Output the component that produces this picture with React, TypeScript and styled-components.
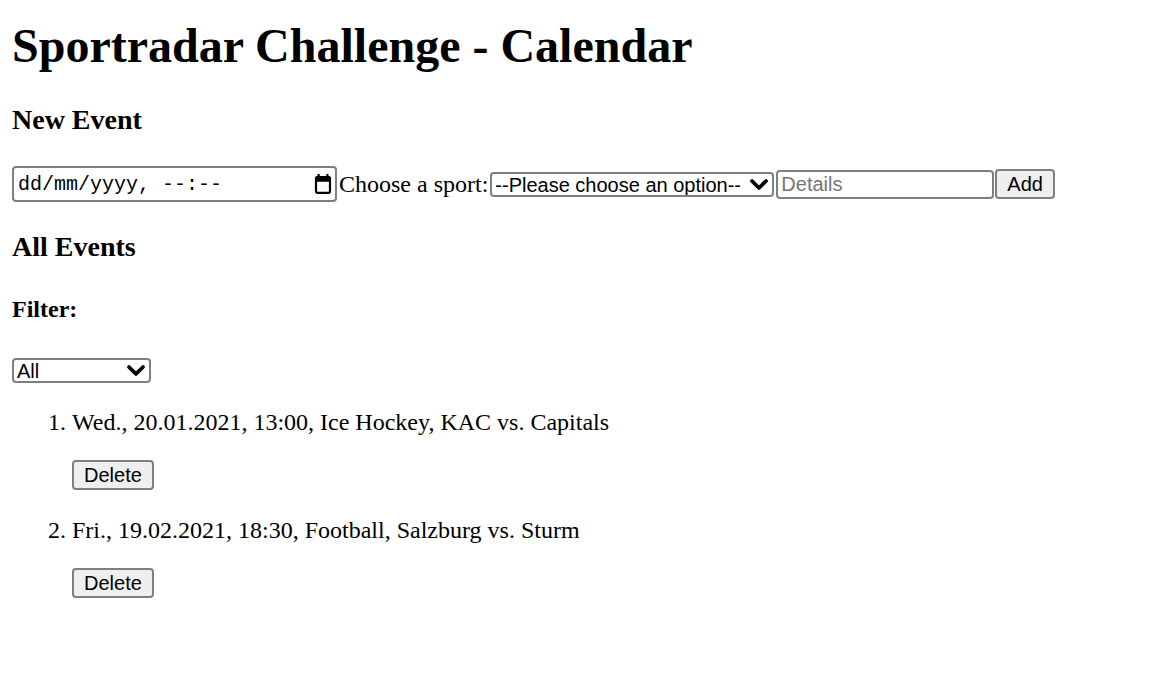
import styled, { createGlobalStyle } from "styled-components";

const GlobalStyle = createGlobalStyle`
  html, body {
    margin: 0;
    padding: 0;
    background: #fff;
  }
  body {
    font-family: "Liberation Serif", "Times New Roman", serif;
    color: #000;
  }
`;

const Page = styled.div`
  padding: 0 12px;
`;

const Title = styled.h1`
  font-size: 48px;
  font-weight: bold;
  line-height: normal;
  margin: 18px 0 31px;
`;

const SectionTitle = styled.h3<{ $top?: number; $bottom?: number }>`
  font-size: 28px;
  font-weight: bold;
  line-height: normal;
  margin: ${(p) => p.$top ?? 0}px 0 ${(p) => p.$bottom ?? 0}px;
`;

const FilterTitle = styled.h4`
  font-size: 24px;
  font-weight: bold;
  line-height: normal;
  margin: 33px 0 0;
`;

const FormRow = styled.form`
  display: flex;
  align-items: center;
  gap: 1px;
`;

const Label = styled.span`
  font-size: 24px;
  line-height: normal;
  margin: 0 1px;
`;

const Field = styled.div<{ $width: number; $height: number }>`
  box-sizing: border-box;
  display: flex;
  align-items: center;
  width: ${(p) => p.$width}px;
  height: ${(p) => p.$height}px;
  border: 2px solid #7f7f7f;
  border-radius: 4px;
  background: #fff;
  padding: 0 3px 0 0;
`;

const DateInput = styled.input`
  flex: 1;
  min-width: 0;
  border: none;
  outline: none;
  background: transparent;
  padding: 0 0 0 4px;
  font-family: "Liberation Mono", "Courier New", monospace;
  font-size: 20px;
  color: #000;
  &::placeholder {
    color: #000;
  }
`;

const NativeSelect = styled.select`
  appearance: none;
  flex: 1;
  min-width: 0;
  height: 100%;
  border: none;
  outline: none;
  background: transparent;
  padding: 0 0 0 3px;
  font-family: "Liberation Sans", Arial, sans-serif;
  font-size: 20px;
  color: #000;
`;

const TextInput = styled.input`
  box-sizing: border-box;
  width: 218px;
  height: 29px;
  margin-left: 1px;
  border: 2px solid #7f7f7f;
  border-radius: 4px;
  padding: 0 3px;
  font-family: "Liberation Sans", Arial, sans-serif;
  font-size: 20px;
  color: #000;
  outline: none;
  &::placeholder {
    color: #757575;
  }
`;

const Button = styled.button<{ $top?: number }>`
  box-sizing: border-box;
  display: block;
  height: 30px;
  margin: ${(p) => p.$top ?? 0}px 0 0;
  padding: 0 10px;
  border: 2px solid #7f7f7f;
  border-radius: 4px;
  background: #efefef;
  font-family: "Liberation Sans", Arial, sans-serif;
  font-size: 20px;
  color: #000;
  line-height: 1;
`;

const FilterWrap = styled.div`
  margin-top: 35px;
`;

const EventList = styled.ol`
  margin: 26px 0 0;
  padding: 0 0 0 60px;
  font-size: 24px;
  line-height: normal;
`;

const EventItem = styled.li`
  & + & {
    margin-top: 27px;
  }
`;

const EventText = styled.p`
  margin: 0;
`;

function Chevron() {
  return (
    <svg width="20" height="13" viewBox="0 0 20 13" aria-hidden>
      <path
        d="M3 3 L10 10 L17 3"
        fill="none"
        stroke="#000"
        strokeWidth="3.8"
        strokeLinecap="round"
        strokeLinejoin="round"
      />
    </svg>
  );
}

function CalendarIcon() {
  return (
    <svg width="18" height="20" viewBox="0 0 18 20" aria-hidden>
      <rect x="3.5" y="0" width="2.2" height="3.5" fill="#000" />
      <rect x="12.3" y="0" width="2.2" height="3.5" fill="#000" />
      <rect x="2" y="3" width="14" height="15.8" rx="1.8" fill="none" stroke="#000" strokeWidth="2.2" />
      <rect x="1" y="2.2" width="16" height="5.6" rx="1.8" fill="#000" />
    </svg>
  );
}

const events = [
  { id: 1, text: "Wed., 20.01.2021, 13:00, Ice Hockey, KAC vs. Capitals" },
  { id: 2, text: "Fri., 19.02.2021, 18:30, Football, Salzburg vs. Sturm" },
];

export default function App() {
  return (
    <Page>
      <GlobalStyle />
      <Title>Sportradar Challenge - Calendar</Title>
      <SectionTitle $bottom={30}>New Event</SectionTitle>
      <FormRow onSubmit={(e) => e.preventDefault()}>
        <Field $width={325} $height={36}>
          <DateInput type="text" placeholder="dd/mm/yyyy, --:--" />
          <CalendarIcon />
        </Field>
        <Label>Choose a sport:</Label>
        <Field $width={284} $height={25}>
          <NativeSelect defaultValue="">
            <option value="">--Please choose an option--</option>
            <option value="football">Football</option>
            <option value="icehockey">Ice Hockey</option>
          </NativeSelect>
          <Chevron />
        </Field>
        <TextInput type="text" placeholder="Details" />
        <Button type="submit">Add</Button>
      </FormRow>
      <SectionTitle $top={29}>All Events</SectionTitle>
      <FilterTitle>Filter:</FilterTitle>
      <FilterWrap>
        <Field $width={139} $height={25}>
          <NativeSelect defaultValue="all">
            <option value="all">All</option>
            <option value="football">Football</option>
            <option value="icehockey">Ice Hockey</option>
          </NativeSelect>
          <Chevron />
        </Field>
      </FilterWrap>
      <EventList>
        {events.map((ev) => (
          <EventItem key={ev.id}>
            <EventText>{ev.text}</EventText>
            <Button $top={24}>Delete</Button>
          </EventItem>
        ))}
      </EventList>
    </Page>
  );
}
